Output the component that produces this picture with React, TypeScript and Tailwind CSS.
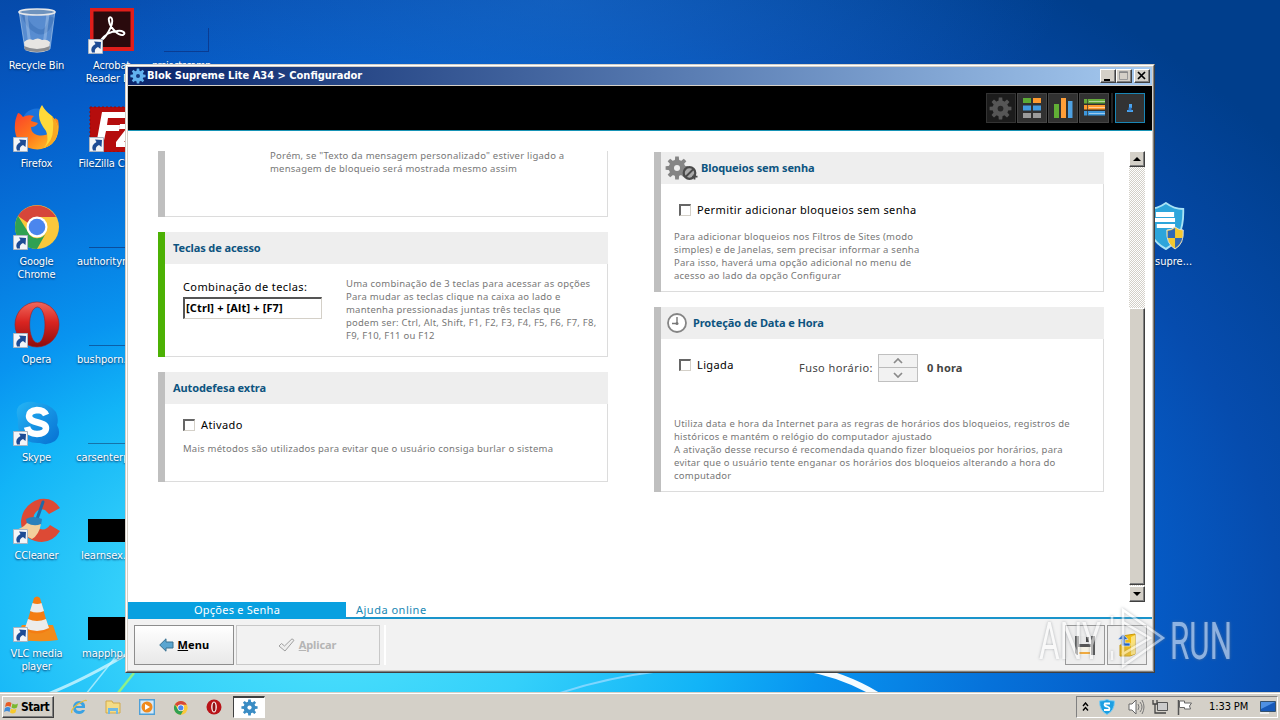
import type { ReactNode } from "react";

const desktopIcons = [
  { label: "Recycle Bin", icon: <RecycleBin />, place: "left-0 top-[6px]", shortcut: false },
  { label: "Firefox", icon: <Firefox />, place: "left-0 top-[104px]", shortcut: true },
  { label: "Google Chrome", icon: <Chrome />, place: "left-0 top-[202px]", shortcut: true },
  { label: "Opera", icon: <Opera />, place: "left-0 top-[300px]", shortcut: true },
  { label: "Skype", icon: <Skype />, place: "left-0 top-[398px]", shortcut: true },
  { label: "CCleaner", icon: <CCleaner />, place: "left-0 top-[496px]", shortcut: true },
  { label: "VLC media player", icon: <Vlc />, place: "left-0 top-[594px]", shortcut: true },
  { label: "Acrobat Reader DC", icon: <Acrobat />, place: "left-[75px] top-[6px]", shortcut: true },
  { label: "FileZilla Client", icon: <FileZilla />, place: "left-[75.5px] top-[104px]", shortcut: true },
];

const desktopFiles = [
  { label: "projectscamp", place: "left-[152px] top-[6px] tracking-[-0.7px]", thumb: "mt-[22px] ml-3 h-6 w-[45px] border-r border-b border-[#0a3c92]" },
  { label: "authorityr", place: "left-[77px] top-[202px]", thumb: "mt-[22px] ml-3 h-6 w-12 border-b border-[#0b4d9c]" },
  { label: "bushporn.", place: "left-[77px] top-[300px]", thumb: "mt-[22px] ml-3 h-6 w-12 border-b border-[#0b5fa8]" },
  { label: "carsenterp", place: "left-[76px] top-[398px]", thumb: "mt-[22px] ml-3 h-6 w-12 border-b border-[#1673a8]" },
  { label: "learnsex.", place: "left-[81px] top-[496px]", thumb: "mt-[23px] ml-[7px] h-[23px] w-12 bg-black" },
  { label: "mapphp.", place: "left-[82px] top-[594px]", thumb: "mt-[23px] ml-[6px] h-[23px] w-12 bg-black" },
];

const gearTeeth = [0, 45, 90, 135, 180, 225, 270, 315];

function Gear({ size, color, hole }: { size: number; color: string; hole: string }) {
  return (
    <svg width={size} height={size} viewBox="0 0 24 24">
      {gearTeeth.map((angle) => (
        <path key={angle} d="M9.8 5 10.2.6h3.600L14.2 5z" fill={color} transform={`rotate(${angle} 12 12)`} />
      ))}
      <circle cx="12" cy="12" r="8.300" fill={color} />
      <circle cx="12" cy="12" r="3" fill={hole} />
    </svg>
  );
}

function RecycleBin() {
  return (
    <svg width="48" height="48" viewBox="0 0 48 48">
      <path d="M7 5h36l-5 38q-13 5-25 0z" fill="#a9c9ee" fillOpacity=".5" stroke="#b9d4ee" strokeOpacity=".6" />
      <path d="M12 8q3 12 13 17t15-14" stroke="#2b62a8" strokeOpacity=".35" strokeWidth="5" fill="none" />
      <path d="M14 8 18 40M36 8l-4 32" stroke="#e4f1ff" strokeOpacity=".28" strokeWidth="3" />
      <path d="M12 36q4-4 9-2 5-3 9 0 5-1 8 2l-1 8q-12 5-24 0z" fill="#e7e5e2" />
      <path d="M12 40q13 6 26 0l-1 4q-12 4-24 0z" fill="#8b8d91" />
      <ellipse cx="25" cy="6" rx="18" ry="3" fill="#6f93bd" stroke="#e5e7ea" strokeWidth="1.6" />
    </svg>
  );
}

function Firefox() {
  return (
    <svg width="48" height="48" viewBox="0 0 48 48">
      <defs>
        <linearGradient id="fox" x1="0" y1="0" x2="1" y2="1">
          <stop offset="0" stopColor="#f9402c" />
          <stop offset=".5" stopColor="#ff7a1a" />
          <stop offset="1" stopColor="#ffcf2e" />
        </linearGradient>
      </defs>
      <circle cx="25" cy="20" r="15.500" fill="#1a73dc" />
      <path d="M6 9q2 0 5 4 5-3 11-1-3 2-3 5l7 2q-2 4-7 4 0 6 6 8 8 2 13-3l5-14 3 2q3 14-6 23-8 8-19 6Q5 42 3 27q-1-10 3-18z" fill="url(#fox)" />
      <path d="M30 1q3 6 10 11 8 9 5 20-3 9-13 12 6-8 2-17-7-9-7-16 0-6 3-10z" fill="#ffd93a" />
      <path d="M40 12q8 9 5 20-3 9-13 12 9-8 9-18 1-7-1-14z" fill="#f7a823" />
    </svg>
  );
}

function Chrome({ size = 48 }: { size?: number }) {
  return (
    <svg width={size} height={size} viewBox="0 0 48 48">
      <circle cx="25" cy="25" r="22" fill="#fbc83b" />
      <path d="M6 14A22 22 0 0 1 44 15H25a10 10 0 0 0-9 6z" fill="#d6463a" />
      <path d="M6 14A22 22 0 0 0 25 47l9-16a10 10 0 0 1-18-1z" fill="#2fa152" />
      <circle cx="25" cy="25" r="10.500" fill="#fff" />
      <circle cx="25" cy="25" r="8.300" fill="#4b86ee" />
    </svg>
  );
}

function Opera() {
  return (
    <svg width="48" height="48" viewBox="0 0 48 48">
      <defs>
        <linearGradient id="opera" x1="0" y1="0" x2="0" y2="1">
          <stop offset="0" stopColor="#f0685c" />
          <stop offset=".45" stopColor="#d92420" />
          <stop offset="1" stopColor="#8c0d0d" />
        </linearGradient>
      </defs>
      <path
        d="M25 2a22 22.500 0 0 1 0 45 22 22.500 0 0 1 0-45zM25.500 7c-11 1-10 35 0 36 10-1 10-35 0-36z"
        fill="url(#opera)"
        fillRule="evenodd"
        stroke="#a81a18"
        strokeWidth=".6"
      />
    </svg>
  );
}

function Skype() {
  return (
    <svg width="48" height="48" viewBox="0 0 48 48">
      <defs>
        <linearGradient id="skype" x1="0" y1="0" x2="1" y2="1">
          <stop offset="0" stopColor="#25b5f5" />
          <stop offset="1" stopColor="#0670d2" />
        </linearGradient>
      </defs>
      <path d="M15 4q6-1 10 1 12 0 19 9 3 7 1 13 5 9-2 16-8 5-15 2-14 1-20-10-3-7-2-14Q1 7 15 4z" fill="url(#skype)" />
      <path d="M34 17q-2-5-9-5-8 1-8 6c0 8 17 5 17 12 0 4-4 6-9 6-6 0-9-3-10-7" fill="none" stroke="#fff" strokeWidth="6.500" strokeLinecap="butt" />
    </svg>
  );
}

function CCleaner() {
  return (
    <svg width="48" height="48" viewBox="0 0 48 48">
      <path d="M48 12Q41 1 28 3 11 8 9 25q0 16 14 20 16 4 25-10l-10-6q-5 7-12 3-6-5-4-13 4-8 11-5l4 4z" fill="#dd4a35" />
      <path d="m31 6-6 17" stroke="#2469a5" strokeWidth="3" strokeLinecap="round" />
      <path d="M14 23q7-4 16 0l-1 6q-8 4-14-1z" fill="#2c80bb" />
      <path d="M15 27q7 4 14 1-2 11-9 15L2 34q8-1 13-7z" fill="#f3cf9c" />
    </svg>
  );
}

function Vlc() {
  return (
    <svg width="48" height="48" viewBox="0 0 48 48">
      <path d="m10 31-7 14q22 4 43 1l-5-15z" fill="#f18a1c" />
      <path d="M22 4q3-3 6 0l9 32q-12 7-24 0z" fill="#f47d13" />
      <path d="m20.500 9-2.500 8q7 3 14 0l-2.500-8q-4 2-9 0zM16 25l-3 9q12 6 24 0l-3-9q-9 4-18 0z" fill="#ececec" />
    </svg>
  );
}

function Acrobat() {
  return (
    <svg width="48" height="48" viewBox="0 0 48 48">
      <path d="M3 2h44v43H3z" fill="#e01e1b" />
      <path d="M6.500 5.500h37V41h-37z" fill="#2a0a0d" />
      <path d="M13 35c5-2 14-16 12-22-1-3-4-2-3 2 1 7 10 15 14 14 4-2-1-5-6-4-6 0-13 4-17 10z" fill="none" stroke="#fff" strokeWidth="1.900" />
    </svg>
  );
}

function FileZilla() {
  return (
    <svg width="48" height="48" viewBox="0 0 48 48">
      <path d="M2 3h46v45H2z" fill="#b50d0d" stroke="#950a0a" strokeDasharray="2 2" />
      <path d="M14 8h24l-1 6H20l-1 7h13l-1 6H18l-3 14H8z" fill="#fff" />
      <path d="M32 20h16v5L36 38h12v5H28v-5l10-13h-7z" fill="#fff" />
    </svg>
  );
}

function ShortcutArrow() {
  return (
    <svg width="15" height="15" viewBox="0 0 15 15" className="absolute bottom-0 left-px">
      <path d="M.5.500h14v14H.5z" fill="#f3f5f8" stroke="#aab5c2" />
      <path d="M4 13.500Q1.500 8 7.500 5L6 2.500l7 .5-.5 7-2.500-2Q6 9.500 7 13.500z" fill="#1d4b94" />
    </svg>
  );
}

function DesktopIcon({ label, icon, place, shortcut }: { label: string; icon: ReactNode; place: string; shortcut: boolean }) {
  return (
    <div className={`absolute flex w-[73px] flex-col items-center ${place}`}>
      <div className="relative mr-px h-12 w-12">
        {icon}
        {shortcut && <ShortcutArrow />}
      </div>
      <span className="mt-[5px] text-center text-[11px] leading-[13px] tracking-[-0.15px]">{label}</span>
    </div>
  );
}

function Panel({ title, icon, accent = "bg-[#bfbfbf]", className, children }: { title?: string; icon?: ReactNode; accent?: string; className: string; children?: ReactNode }) {
  return (
    <section className={`flex w-[450px] ${className}`}>
      <div className={`w-[7px] shrink-0 ${accent}`} />
      <div className="flex min-w-0 flex-1 flex-col border-r border-b border-[#dcdcdc]">
        {title && (
          <h2 className="-mr-px flex h-8 shrink-0 items-center bg-[#eee] font-['Noto_Sans'] text-[11px] font-bold tracking-[-0.1px] text-[#0d5480]">
            {icon}
            {title}
          </h2>
        )}
        {children}
      </div>
    </section>
  );
}

function Checkbox({ label }: { label: string }) {
  return (
    <label className="flex items-center gap-1.5 text-[11px] leading-[14px] tracking-[0.38px] text-black">
      <span className="h-3 w-3 border-t-2 border-l-2 border-r border-b border-t-[#666] border-l-[#666] border-r-[#d4d0c8] border-b-[#d4d0c8] bg-white" />
      {label}
    </label>
  );
}

const helpText = "whitespace-nowrap text-[9.5px] leading-[13px] text-[#777] tracking-[0.23px]";
const raised = "border border-t-white border-l-white border-r-[#404040] border-b-[#404040] bg-[#d4d0c8] shadow-[inset_-1px_-1px_0_#808080]";

function ClockIcon() {
  return (
    <svg width="22" height="22" viewBox="0 0 22 22" className="mr-[5px] ml-[5px]">
      <circle cx="11" cy="11" r="9" fill="#fff" stroke="#858585" strokeWidth="1.800" />
      <path d="M11 5v7M11 11.500H6" stroke="#777" strokeWidth="1.400" />
      <circle cx="11" cy="11.500" r="1.500" fill="#777" />
    </svg>
  );
}

function GearBlockIcon() {
  return (
    <span className="relative mr-[3px] ml-1 h-6 w-[33px]">
      <Gear size={24} color="#858585" hole="#eee" />
      <svg width="17" height="16" viewBox="0 0 17 16" className="absolute right-0 bottom-0">
        <circle cx="8.500" cy="9" r="5.800" fill="#aaa" stroke="#4a4a4a" strokeWidth="2.200" />
        <path d="m4.500 13 8-8M13.500 10v5.500M11 12.700h5.500" stroke="#4a4a4a" strokeWidth="1.800" />
      </svg>
    </span>
  );
}

function TitleBar() {
  return (
    <div className="flex h-[18px] items-center bg-linear-to-r from-[#0a246a] to-[#a6caf0] pl-0.5">
      <Gear size={16} color="#62b2ee" hole="#153a80" />
      <span className="ml-px pt-px text-[11px] font-bold text-white">Blok Supreme Lite A34 &gt; Configurador</span>
      <div className="mr-0.5 ml-auto flex">
        <span className={`h-[14px] w-4 ${raised}`}>
          <svg width="14" height="12" viewBox="0 0 14 12"><path d="M3 9h6v2H3z" /></svg>
        </span>
        <span className={`mr-0.5 h-[14px] w-4 ${raised}`}>
          <svg width="14" height="12" viewBox="0 0 14 12"><path d="M2.500 1.500h8v8h-8z" fill="none" stroke="#999" /><path d="M2 2.500h9" stroke="#888" /></svg>
        </span>
        <span className={`h-[14px] w-4 ${raised}`}>
          <svg width="14" height="12" viewBox="0 0 14 12"><path d="m3 2 7 7M10 2 3 9" stroke="#000" strokeWidth="1.700" /></svg>
        </span>
      </div>
    </div>
  );
}

function Toolbar() {
  const button = "flex h-[30px] w-[30px] items-center justify-center border border-[#444] bg-[#313131]";
  return (
    <div className="flex h-[45px] justify-end gap-px border-b border-[#1793b5] bg-black pt-[7px] pr-[7px]">
      <span className="flex h-[30px] w-[30px] items-center justify-center border border-[#333] bg-[#1c1c1c] pr-0.5"><Gear size={23} color="#565656" hole="#262626" /></span>
      <span className={button}>
        <svg width="20" height="22" viewBox="0 0 20 22">
          <path d="M1 1h8v5H1z" fill="#5cab36" /><path d="M11 1h8v5h-8z" fill="#ff9a2e" />
          <path d="M1 8.500h8v5H1zM11 8.500h8v5h-8z" fill="#439be0" />
          <path d="M1 16h8v5H1zM11 16h8v5h-8z" fill="#9b9b9b" />
        </svg>
      </span>
      <span className={button}>
        <svg width="20" height="22" viewBox="0 0 20 22">
          <path d="M1 7h5v14H1z" fill="#61ae35" /><path d="M8 1h5v20H8z" fill="#ff9e38" /><path d="M15 4h4.500v17H15z" fill="#4ea1e2" />
        </svg>
      </span>
      <span className={button}>
        <svg width="22" height="20" viewBox="0 0 22 20">
          <path d="M1 1h21v4.500H1z" fill="#65ab3c" /><path d="M1 7h21v4.500H1z" fill="#ff9a2e" /><path d="M1 13h21v4.500H1z" fill="#3c96da" />
          <path d="M6 3.500h16M6 9.500h16M6 15.500h16" stroke="#fff" strokeOpacity=".5" />
          <path d="M4.500 1v17" stroke="#313131" strokeOpacity=".7" />
        </svg>
      </span>
      <span className="mx-px h-[30px] w-0.5 bg-[#222]" />
      <span className="flex h-[30px] w-[30px] items-center justify-center border border-[#1a86b5] bg-[#333]">
        <svg width="8" height="10" viewBox="0 0 8 10"><path d="M3 1h3v4H3zM1 7h6v2H1z" fill="#4aa3ee" /><path d="M2.500 4.500h3v3h-3z" fill="#2875c8" /></svg>
      </span>
    </div>
  );
}

function Scrollbar() {
  return (
    <div className="mt-5 ml-[25px] flex h-[451px] w-4 flex-col bg-[repeating-conic-gradient(#d4d0c8_0_25%,#fff_0_50%)] bg-[length:2px_2px]">
      <span className={`flex h-4 items-center justify-center ${raised}`}>
        <svg width="8" height="4" viewBox="0 0 8 4"><path d="m0 4 4-4 4 4z" /></svg>
      </span>
      <span className={`mt-[141px] h-[277px] ${raised}`} />
      <span className={`mt-px flex h-4 items-center justify-center ${raised}`}>
        <svg width="8" height="4" viewBox="0 0 8 4"><path d="m0 0 4 4 4-4z" /></svg>
      </span>
    </div>
  );
}

function Settings() {
  return (
    <div className="flex h-[471px] bg-white pl-[30px]">
      <div className="flex flex-col gap-[15px] pt-5">
        <Panel className="h-[66px]">
          <p className={`${helpText} -mt-[2px] ml-[105px]`}>
            Porém, se "Texto da mensagem personalizado" estiver ligado a
            <br />
            mensagem de bloqueio será mostrada mesmo assim
          </p>
        </Panel>
        <Panel title="Teclas de acesso" icon={<i className="w-2" />} accent="bg-[#4cb104]" className="h-[125px]">
          <div className="flex pl-[18px]">
            <div className="w-[163px] pt-4">
              <p className="text-[11px] leading-[14px] tracking-[0.4px] text-black">Combinação de teclas:</p>
              <div className="mt-[3px] h-[22px] w-[139px] border border-t-2 border-l-2 border-t-[#555] border-l-[#555] border-r-[#d4d0c8] border-b-[#d4d0c8] bg-white pl-px text-[11px] leading-[18px] font-bold tracking-[0.14px] text-black">
                [Ctrl] + [Alt] + [F7]
              </div>
            </div>
            <p className={`${helpText} pt-[13px]`}>
              Uma combinação de 3 teclas para acessar as opções
              <br />
              Para mudar as teclas clique na caixa ao lado e
              <br />
              mantenha pressionadas juntas três teclas que
              <br />
              podem ser: Ctrl, Alt, Shift, F1, F2, F3, F4, F5, F6, F7, F8,
              <br />
              F9, F10, F11 ou F12
            </p>
          </div>
        </Panel>
        <Panel title="Autodefesa extra" icon={<i className="w-2" />} className="h-[110px]">
          <div className="pt-[14px] pl-[18px]">
            <Checkbox label="Ativado" />
            <p className={`${helpText} mt-[10px]`}>
              Mais métodos são utilizados para evitar que o usuário consiga burlar o sistema
            </p>
          </div>
        </Panel>
      </div>
      <div className="ml-[46px] flex flex-col gap-[15px] pt-[21px]">
        <Panel title="Bloqueios sem senha" icon={<GearBlockIcon />} className="h-[140px]">
          <div className="pt-[19px] pl-[18px]">
            <Checkbox label="Permitir adicionar bloqueios sem senha" />
            <p className={`${helpText} mt-[13px] -ml-[5px]`}>
              Para adicionar bloqueios nos Filtros de Sites (modo
              <br />
              simples) e de Janelas, sem precisar informar a senha
              <br />
              Para isso, haverá uma opção adicional no menu de
              <br />
              acesso ao lado da opção Configurar
            </p>
          </div>
        </Panel>
        <Panel title="Proteção de Data e Hora" icon={<ClockIcon />} className="h-[185px]">
          <div className="pt-[15px] pl-[18px]">
            <div className="flex h-7">
              <div className="mt-1 w-[120px]">
                <Checkbox label="Ligada" />
              </div>
              <span className="mt-[7px] w-[79px] text-[11px] leading-[14px] tracking-[0.44px] text-[#444]">Fuso horário:</span>
              <div className="flex w-10 flex-col border border-[#c0c0c0] bg-[#f2f2f2]">
                <span className="flex h-[13px] items-center justify-center border-b border-[#bbb]">
                  <svg width="10" height="6" viewBox="0 0 10 6"><path d="m1 5 4-4 4 4" fill="none" stroke="#8a8a8a" strokeWidth="1.700" /></svg>
                </span>
                <span className="flex h-[13px] items-center justify-center">
                  <svg width="10" height="6" viewBox="0 0 10 6"><path d="m1 1 4 4 4-4" fill="none" stroke="#8a8a8a" strokeWidth="1.700" /></svg>
                </span>
              </div>
              <b className="mt-[7px] ml-[9px] text-[11px] leading-[14px] tracking-[0.2px] text-[#444]">0 hora</b>
            </div>
            <p className={`${helpText} mt-[35px] -ml-[5px]`}>
              Utiliza data e hora da Internet para as regras de horários dos bloqueios, registros de
              <br />
              históricos e mantém o relógio do computador ajustado
              <br />
              A ativação desse recurso é recomendada quando fizer bloqueios por horários, para
              <br />
              evitar que o usuário tente enganar os horários dos bloqueios alterando a hora do
              <br />
              computador
            </p>
          </div>
        </Panel>
      </div>
      <Scrollbar />
    </div>
  );
}

function Footer() {
  return (
    <>
      <div className="flex h-[17px] border-b-2 border-[#1a94cb] bg-white text-[11px] leading-4">
        <span className="h-[17px] w-[218px] bg-[#08a0e0] text-center tracking-[0.25px] text-white">Opções e Senha</span>
        <span className="ml-[10px] tracking-[0.5px] text-[#1787b4]">Ajuda online</span>
      </div>
      <div className="flex h-[51px] bg-[#f2f2f2] pt-1.5 pl-1.5 text-[11px] font-bold">
        <button className="flex h-10 w-[100px] items-center justify-center gap-1 border border-[#8d8d8d] bg-linear-to-b from-white to-[#e8e8e8]">
          <svg width="15" height="14" viewBox="0 0 15 14"><path d="M.7 7 7 .8V4h7v6H7v3.200z" fill="#5aa5d0" stroke="#397090" /></svg>
          <span className="tracking-[0.15px]"><u>M</u>enu</span>
        </button>
        <button className="ml-0.5 flex h-10 w-36 items-center justify-center gap-1 border border-[#c8c8c8] pr-0.5 text-[#b5b5b5]">
          <svg width="17" height="14" viewBox="0 0 17 14"><path d="m1 8 2.500-2.500L6.500 8 14 .8l2 1.500L7 13z" fill="#eee" stroke="#a0a0a0" /></svg>
          <span className="tracking-[-0.1px]"><u>A</u>plicar</span>
        </button>
        <i className="ml-1 h-10 w-0.5 bg-white" />
        <span className="ml-auto flex h-10 w-10 items-center justify-center border border-[#999] bg-[#ededed]">
          <svg width="20" height="20" viewBox="0 0 20 20">
            <path d="M0 1h20v19H2l-2-2z" fill="#555" /><path d="M4 1h12v8H4z" fill="#e9e9e9" /><path d="M11 2h3v5h-3z" fill="#444" /><path d="M3 12h13v8H3z" fill="#f4f1e5" /><path d="M4 17h11v2H4z" fill="#f0a93e" />
          </svg>
        </span>
        <span className="mr-[5px] ml-0.5 flex h-10 w-10 items-center justify-center border border-[#999] bg-[#ededed]">
          <svg width="20" height="24" viewBox="0 0 20 24">
            <path d="M5 3 18 1v20l-5 2H3V12h2z" fill="#f2bd14" stroke="#c9980a" /><path d="m14 4 4-2v19l-4 1z" fill="#fbe27a" />
            <path d="m6 1 5 5.500H8V10h5v3H5V6.500H1z" fill="#1f62c4" stroke="#dceafb" strokeWidth=".7" />
          </svg>
        </span>
      </div>
    </>
  );
}

function Watermark() {
  return (
    <svg width="220" height="76" viewBox="0 0 220 76" className="absolute top-[606px] left-[1036px] opacity-55 drop-shadow-[0_0_1.5px_#7c8288]">
      <g fill="#fff" fontFamily="Roboto" fontSize="52">
        <text x="3" y="53" textLength="62" lengthAdjust="spacingAndGlyphs">ANY</text>
        <text x="134" y="53" textLength="62" lengthAdjust="spacingAndGlyphs">RUN</text>
      </g>
      <g fill="#fff" fillOpacity=".15" stroke="#fff" strokeWidth="2.500">
        <path d="M87 4v12l27 16-27 16v12l40-28z" />
        <path d="M87 16v32" />
        <path d="M76 10v9M76 45v9" />
      </g>
    </svg>
  );
}

function WindowsLogo() {
  return (
    <svg width="15" height="15" viewBox="0 0 15 15">
      <path d="M2 3q3-2 5.500 0l-1 4Q4 5 1 7z" fill="#e85c24" />
      <path d="M8.500 3.500q2.500 2 5.500 0l-1 4q-3 2-5.500 0z" fill="#7ab82e" />
      <path d="M1 8q3-2 5.500 0l-1 4Q3 10 0 12z" fill="#3e8bd8" />
      <path d="M7 8.500q3 2 5.500 0l-1 4q-3 2-5.500 0z" fill="#f7c92c" />
    </svg>
  );
}

function Taskbar() {
  return (
    <div className="relative flex h-7 items-start border-t border-[#d4d0c8] bg-[#d4d0c8] pt-[3px] text-black shadow-[inset_0_1px_0_#fff]">
      <button className={`ml-0.5 flex h-[22px] w-[52px] items-center gap-0.5 pl-px text-[12px] font-bold ${raised}`}>
        <WindowsLogo />
        <span className="tracking-[-0.5px]">Start</span>
      </button>
      <div className="ml-[17px] flex h-[22px] items-center gap-[18px]">
        <svg width="16" height="16" viewBox="0 0 16 16">
          <path d="M14 9H5q0 3 3.500 3 2 0 2.500-1h3q-1.500 4-6 4Q2 15 2 8.500 2.500 2 8.300 2 15 2.500 14 9zM5 7h6Q10.500 4.500 8 4.500T5 7z" fill="#3aa2e3" />
          <path d="M1 14Q-1 11 7 5q8-5 8.500-3" fill="none" stroke="#e8bd3c" strokeWidth="1.300" />
        </svg>
        <svg width="16" height="16" viewBox="0 0 16 16">
          <path d="M1 2h6l1 2h7v10H1z" fill="#f5dc86" stroke="#d2a94b" /><path d="M3 9h10v6h-2v-3H5v3H3z" fill="#72b9e3" />
        </svg>
        <svg width="16" height="16" viewBox="0 0 16 16">
          <path d="M.7.700h14.600v14.600H.7z" fill="#d7e9f7" stroke="#4ea0d8" strokeWidth="1.400" /><circle cx="8" cy="8" r="5.500" fill="#f08a1d" /><path d="m6 5 5 3-5 3z" fill="#fff" />
        </svg>
        <Chrome size={15} />
        <svg width="16" height="16" viewBox="0 0 16 16">
          <circle cx="8" cy="8" r="7.500" fill="#b91318" /><ellipse cx="8" cy="8" rx="2.800" ry="5.500" fill="#fff" /><ellipse cx="8" cy="8" rx="1.500" ry="4.500" fill="#8f1014" />
        </svg>
      </div>
      <div className="ml-[11px] flex h-[22px] w-8 items-center justify-center border border-t-2 border-t-[#404040] border-l-[#404040] border-r-white border-b-white bg-white">
        <Gear size={17} color="#3a8cc4" hole="#fff" />
      </div>
      <div className="mr-0.5 ml-auto flex h-[22px] w-[202px] items-center border border-t-[#808080] border-l-[#808080] border-r-white border-b-white pl-[5px]">
        <svg width="8" height="10" viewBox="0 0 8 10"><path d="m1 4 2.500-3L6 4M1 8.500l2.500-3 2.500 3" fill="none" stroke="#000" strokeWidth="1.400" /></svg>
        <svg width="16" height="16" viewBox="0 0 16 16" className="ml-[9px]"><path d="M.5 2Q5 2 8 .5 11 2 15.500 2q0 10-7.500 13.500Q.5 12 .5 2z" fill="#1c9fe2" stroke="#7ccbf2" /><path d="M11 4.500H6Q4.500 7 8 7.500q3.500 1 2 3.500H5" fill="none" stroke="#fff" strokeWidth="1.800" /></svg>
        <svg width="17" height="16" viewBox="0 0 17 16" className="ml-[13px]"><path d="M1 5h3l4-4v14l-4-4H1z" fill="#fff" stroke="#666" /><path d="M10 5q2 3 0 6M12 3q4 5 0 10M14 1q4 7 0 14" fill="none" stroke="#777" /></svg>
        <svg width="17" height="16" viewBox="0 0 17 16" className="ml-[7px]"><path d="M5.500 3.500h10v8h-10z" fill="#ccc" stroke="#555" /><path d="M5 14h9M1 1v4h4V1M3 5v9h4" fill="none" stroke="#444" strokeWidth="1.300" /></svg>
        <svg width="17" height="16" viewBox="0 0 17 16" className="ml-[7px]"><path d="M2.500 1v15" stroke="#555" strokeWidth="1.500" /><path d="M3.500 2h5v2h7l-2 3 1 3h-6V8.500h-5z" fill="#fff" stroke="#666" /></svg>
        <span className="ml-4 w-10 text-[11px] tracking-[-0.1px] whitespace-nowrap">1:33 PM</span>
        <svg width="16" height="14" viewBox="0 0 16 14" className="ml-[11px]"><path d="M.5 1.500h15v10H.5z" fill="#1759b8" stroke="#35526e" /><path d="M1 2h14L1 9z" fill="#4f90e2" /><path d="M0 12h9v2H0z" fill="#eee" /></svg>
      </div>
    </div>
  );
}

export default function App() {
  return (
    <div className="relative flex h-[720px] w-[1280px] flex-col overflow-hidden bg-[radial-gradient(ellipse_500px_180px_at_560px_0px,rgba(40,130,220,0.35),transparent),radial-gradient(ellipse_950px_640px_at_330px_620px,#4fe2fc_0%,#34d0fa_22%,#12b4f7_40%,#0894f0_52%,#0672da_70%,#055cc8_85%,#064cae_100%,#003e8c_125%)] font-['DejaVu_Sans_Condensed','DejaVu_Sans',sans-serif]">
      <div className="relative flex-1 text-white [text-shadow:0_1px_2px_#00285a]">
        <svg width="1280" height="692" className="absolute inset-0" fill="none">
          <path d="M48 694Q95 675 150 640" stroke="#cff6ff" strokeWidth="3" opacity=".8" />
          <path d="m86 694 32-40" stroke="#cff6ff" strokeWidth="1.500" opacity=".7" />
          <path d="m118 693 16-20" stroke="#8df08a" strokeWidth="2.500" />
          <path d="M560 693q45-15 100-22" stroke="#7ed6ff" strokeWidth="2" />
          <path d="M805 668q40 7 74 28" stroke="#f4fbff" strokeWidth="6" />
        </svg>
        {desktopIcons.map((item) => (
          <DesktopIcon key={item.label} {...item} />
        ))}
        {desktopFiles.map((file) => (
          <div key={file.label} className={`absolute text-[11px] leading-[13px] ${file.place}`}>
            <div className={file.thumb} />
            <span className="mt-[7px] block">{file.label}</span>
          </div>
        ))}
        <div className="absolute top-[202px] left-[1144px]">
          <svg width="42" height="48" viewBox="0 0 46 48" preserveAspectRatio="none">
            <path d="M3 7q12 0 21-6 9 6 19 6 1 30-19 40Q2 37 3 7z" fill="#2da5db" stroke="#a8e2f5" strokeWidth="2" />
            <path d="M13 10h20v5H13zM10 16h24v4H10zM14 22h20v4H14z" fill="#fff" />
            <path d="M25 28q5 0 9-3 4 3 9 3 1 14-9 19-10-5-9-19z" fill="#f4c830" stroke="#d5dde5" />
            <path d="M34 26v10h-8v-7q4 0 8-3zM34 36h8q-2 7-8 10z" fill="#2f68b8" />
          </svg>
          <span className="mt-[5px] ml-[11px] block text-[11px] leading-[13px]">supre...</span>
        </div>
      </div>
      <div className="absolute top-16 left-[125px] w-[1030px] border border-t-[#d4d0c8] border-l-[#d4d0c8] border-r-[#404040] border-b-[#404040] bg-[#d4d0c8]">
        <div className="flex flex-col border border-t-white border-l-white border-r-[#808080] border-b-[#808080] p-px">
          <TitleBar />
          <div className="mt-px font-['Noto_Sans',sans-serif]">
            <Toolbar />
            <Settings />
            <Footer />
          </div>
        </div>
      </div>
      <Taskbar />
      <Watermark />
    </div>
  );
}
